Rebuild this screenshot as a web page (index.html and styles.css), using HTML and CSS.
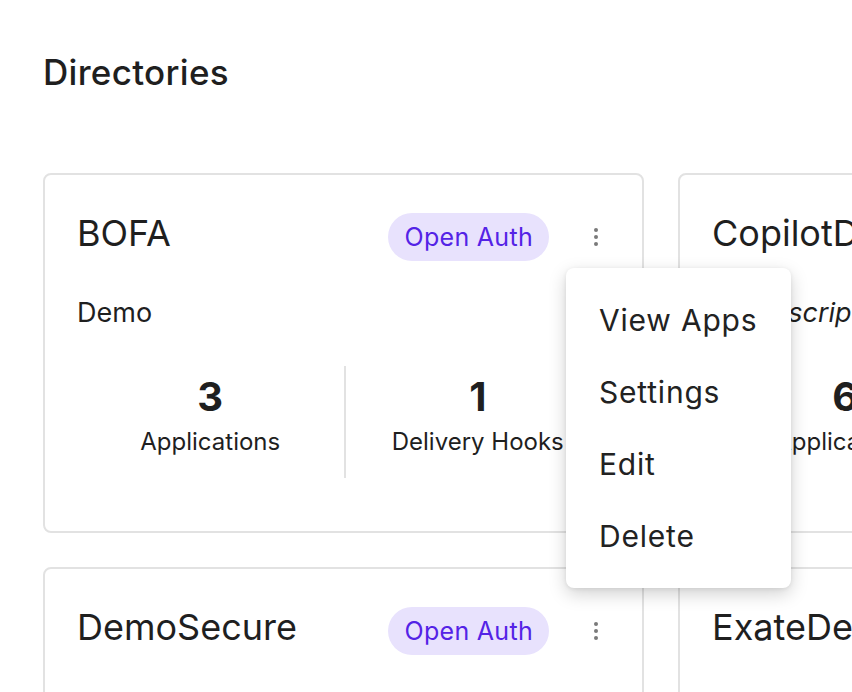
FILE: index.html
```html
<!DOCTYPE html>
<html>
<head>
<meta charset="utf-8">
<link rel="stylesheet" href="styles.css">
</head>
<body>
<div class="page">
  <h1 class="title">Directories</h1>
  <div class="grid">
    <div class="card">
      <div class="card-head">
        <div class="name">BOFA</div>
        <span class="badge">Open Auth</span>
        <div class="kebab-wrap">
          <button class="kebab" aria-label="More"><span></span><span></span><span></span></button>
          <div class="menu">
            <div class="menu-item">View Apps</div>
            <div class="menu-item">Settings</div>
            <div class="menu-item">Edit</div>
            <div class="menu-item">Delete</div>
          </div>
        </div>
      </div>
      <div class="desc">Demo</div>
      <div class="stats">
        <div class="stat"><div class="num">3</div><div class="label">Applications</div></div>
        <div class="stat"><div class="num">1</div><div class="label">Delivery Hooks</div></div>
      </div>
    </div>
    <div class="card">
      <div class="card-head">
        <div class="name">CopilotDemo</div>
        <span class="badge">Open Auth</span>
        <div class="kebab-wrap"><button class="kebab" aria-label="More"><span></span><span></span><span></span></button></div>
      </div>
      <div class="desc empty">No description</div>
      <div class="stats">
        <div class="stat"><div class="num">6</div><div class="label">Applications</div></div>
        <div class="stat"><div class="num">2</div><div class="label">Delivery Hooks</div></div>
      </div>
    </div>
    <div class="card">
      <div class="card-head">
        <div class="name">DemoSecure</div>
        <span class="badge">Open Auth</span>
        <div class="kebab-wrap"><button class="kebab" aria-label="More"><span></span><span></span><span></span></button></div>
      </div>
      <div class="desc">Demo</div>
      <div class="stats">
        <div class="stat"><div class="num">2</div><div class="label">Applications</div></div>
        <div class="stat"><div class="num">1</div><div class="label">Delivery Hooks</div></div>
      </div>
    </div>
    <div class="card">
      <div class="card-head">
        <div class="name">ExateDemo</div>
        <span class="badge">Open Auth</span>
        <div class="kebab-wrap"><button class="kebab" aria-label="More"><span></span><span></span><span></span></button></div>
      </div>
      <div class="desc">Demo</div>
      <div class="stats">
        <div class="stat"><div class="num">4</div><div class="label">Applications</div></div>
        <div class="stat"><div class="num">1</div><div class="label">Delivery Hooks</div></div>
      </div>
    </div>
  </div>
</div>
</body>
</html>
```

FILE: styles.css
```css
html, body {
  margin: 0;
  padding: 0;
  background: #ffffff;
  overflow: hidden;
}
body {
  font-family: Inter, "Noto Sans", "Liberation Sans", sans-serif;
  color: #1f1f1f;
  width: 852px;
  height: 692px;
}
.page {
  padding: 46px 0 0 43px;
}
.title {
  margin: 0;
  font-size: 35px;
  font-weight: 450;
  line-height: 52px;
  letter-spacing: 0.3px;
}
.grid {
  margin-top: 75px;
  display: grid;
  grid-template-columns: 601px 601px;
  gap: 34px;
}
.card {
  box-sizing: border-box;
  height: 360px;
  border: 2px solid #e2e2e2;
  border-radius: 8px;
  padding: 38px 32px 0 32px;
  background: #fff;
}
.card-head {
  display: flex;
  align-items: center;
  height: 48px;
}
.name {
  flex: 1;
  font-size: 36px;
  font-weight: 400;
  white-space: nowrap;
  line-height: 44px;
  margin-top: -8px;
}
.badge {
  background: #e8e2fd;
  color: #5423e6;
  font-size: 25px;
  letter-spacing: 0.3px;
  line-height: 48px;
  height: 48px;
  padding: 0 16px 0 17px;
  border-radius: 24px;
  white-space: nowrap;
}
.kebab-wrap {
  position: relative;
  margin-left: 35px;
  margin-right: 2px;
  width: 24px;
  height: 48px;
}
.kebab {
  border: 0;
  background: transparent;
  padding: 0;
  width: 24px;
  height: 48px;
  display: flex;
  flex-direction: column;
  align-items: center;
  justify-content: center;
  gap: 3px;
}
.kebab span {
  width: 4px;
  height: 4px;
  border-radius: 50%;
  background: #7a7a7a;
}
.menu {
  position: absolute;
  top: 55px;
  left: -18px;
  width: 225px;
  box-sizing: border-box;
  padding: 16px 0;
  background: #fff;
  border-radius: 8px;
  box-shadow: 0 6px 18px rgba(0,0,0,0.18), 0 1px 4px rgba(0,0,0,0.08);
  z-index: 10;
}
.menu-item {
  height: 72px;
  line-height: 72px;
  padding-left: 33px;
  font-size: 30px;
  letter-spacing: 0.8px;
  color: #222;
  white-space: nowrap;
}
.desc {
  margin-top: 35px;
  font-size: 27px;
  line-height: 34px;
  white-space: nowrap;
}
.desc.empty {
  font-style: italic;
}
.stats {
  margin-top: 36px;
  display: grid;
  grid-template-columns: 1fr 1fr;
}
.stat {
  text-align: center;
  height: 112px;
  padding-top: 8px;
  box-sizing: border-box;
}
.stat + .stat {
  border-left: 2px solid #e2e2e2;
}
.num {
  font-size: 40px;
  font-weight: 700;
  line-height: 46px;
}
.label {
  font-size: 24px;
  line-height: 44px;
  white-space: nowrap;
}
```
